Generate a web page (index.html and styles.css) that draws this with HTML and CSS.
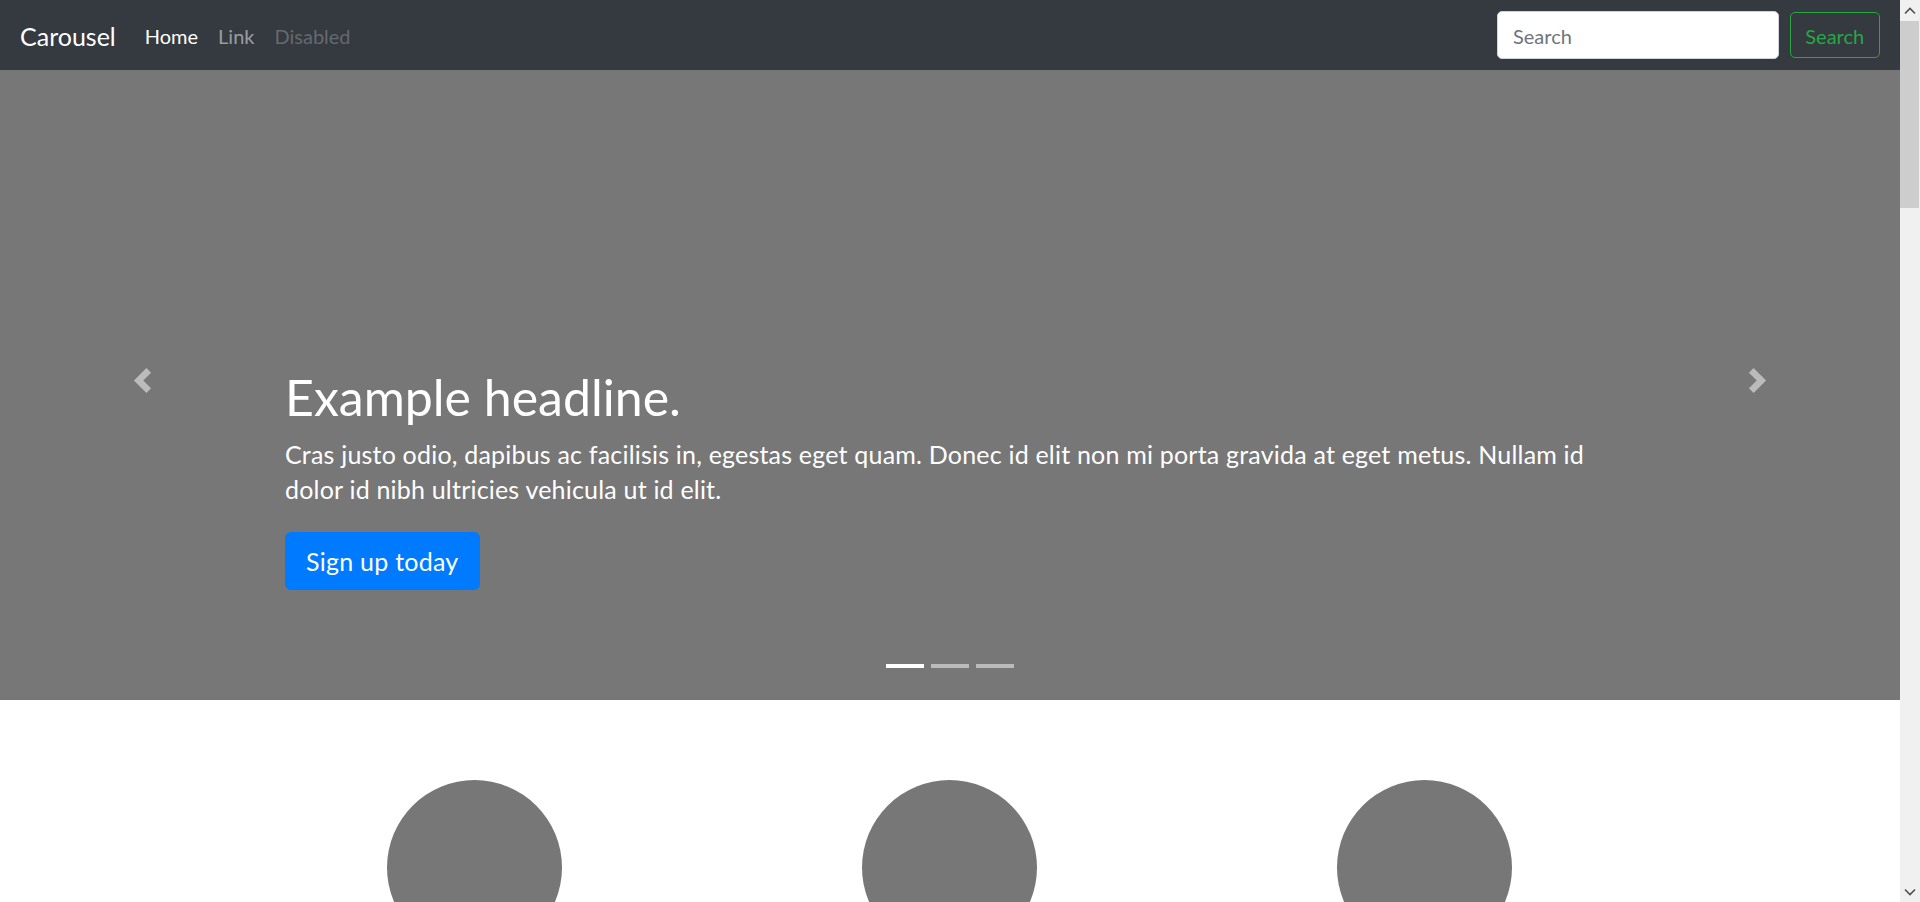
FILE: index.html
```html
<!DOCTYPE html>
<html lang="en">
<head>
<meta charset="utf-8">
<title>Carousel Template</title>
<link rel="stylesheet" href="styles.css">
</head>
<body>
<div class="window">
  <div class="page">
    <header class="navbar">
      <a class="brand" href="#">Carousel</a>
      <ul class="nav">
        <li><a class="nav-link active" href="#">Home</a></li>
        <li><a class="nav-link" href="#">Link</a></li>
        <li><a class="nav-link disabled" href="#">Disabled</a></li>
      </ul>
      <form class="search">
        <input class="search-input" type="text" placeholder="Search">
        <button class="search-btn" type="button">Search</button>
      </form>
    </header>

    <section class="carousel">
      <div class="indicators">
        <span class="dot active"></span>
        <span class="dot"></span>
        <span class="dot"></span>
      </div>
      <div class="caption">
        <h1 class="headline">Example headline.</h1>
        <p class="lead">Cras justo odio, dapibus ac facilisis in, egestas eget quam. Donec id elit non mi porta gravida at eget metus. Nullam id dolor id nibh ultricies vehicula ut id elit.</p>
        <p class="cta"><a class="btn-primary" href="#">Sign up today</a></p>
      </div>
      <a class="control prev" href="#">
        <svg width="25" height="25" viewBox="0 0 8 8"><path fill="#fff" d="M5.25 0l-4 4 4 4 1.5-1.5L4.25 4l2.5-2.5L5.25 0z"/></svg>
      </a>
      <a class="control next" href="#">
        <svg width="25" height="25" viewBox="0 0 8 8"><path fill="#fff" d="M2.75 0l-1.5 1.5L3.75 4l-2.5 2.5L2.75 8l4-4-4-4z"/></svg>
      </a>
    </section>

    <section class="marketing">
      <div class="row">
        <div class="col"><div class="circle"></div></div>
        <div class="col"><div class="circle"></div></div>
        <div class="col"><div class="circle"></div></div>
      </div>
    </section>
  </div>

  <div class="scrollbar">
    <div class="sb-arrow">
      <svg width="12" height="8" viewBox="0 0 12 8"><path d="M1 6.5L6 1.5l5 5" fill="none" stroke="#505050" stroke-width="1.6"/></svg>
    </div>
    <div class="sb-thumb"></div>
    <div class="sb-track"></div>
    <div class="sb-arrow">
      <svg width="12" height="8" viewBox="0 0 12 8"><path d="M1 1.5L6 6.5l5-5" fill="none" stroke="#505050" stroke-width="1.6"/></svg>
    </div>
  </div>
</div>
</body>
</html>
```

FILE: styles.css
```css
* { box-sizing: border-box; }

html, body {
  margin: 0;
  padding: 0;
  height: 902px;
  overflow: hidden;
}

body {
  font-family: "Lato", "Open Sans", "Noto Sans", sans-serif;
  color: #212529;
  background: #fff;
}

.window {
  display: flex;
  height: 902px;
}

.page {
  flex: 1;
  min-width: 0;
  padding-top: 60px;
  overflow: hidden;
  position: relative;
}

/* Navbar (fixed over the top of the carousel) */
.navbar {
  position: fixed;
  top: 0;
  left: 0;
  right: 20px;
  height: 70px;
  z-index: 10;
  background: #343a40;
  display: flex;
  align-items: center;
  padding: 0 20px;
}

.brand {
  color: #fff;
  font-size: 25px;
  text-decoration: none;
  margin-right: 19px;
  padding-top: 1px;
}

.nav {
  list-style: none;
  margin: 0;
  padding: 0;
  display: flex;
}

.nav-link {
  display: block;
  padding: 2px 10px 0;
  font-size: 20px;
  color: rgba(255, 255, 255, 0.5);
  text-decoration: none;
}

.nav-link.active { color: #fff; }
.nav-link.disabled { color: rgba(255, 255, 255, 0.25); }

.search {
  margin: 0 0 0 auto;
  display: flex;
  align-items: center;
}

.search-input {
  width: 282px;
  height: 47.5px;
  margin-right: 10.5px;
  padding: 2px 15px 0;
  font-family: inherit;
  font-size: 20px;
  color: #495057;
  background: #fff;
  border: 1.25px solid #ced4da;
  border-radius: 5px;
  outline: none;
}

.search-input::placeholder { color: #6c757d; }

.search-btn {
  width: 90.5px;
  height: 46px;
  padding: 2px 0 0;
  font-family: inherit;
  font-size: 20px;
  color: #28a745;
  background: transparent;
  border: 1.25px solid #28a745;
  border-radius: 5px;
}

/* Carousel */
.carousel {
  position: relative;
  height: 640px;
  background: #777;
  margin-bottom: 80px;
}

.caption {
  position: absolute;
  left: 15%;
  right: 15%;
  bottom: 60px;
  padding: 25px 0;
  color: #fff;
  text-align: left;
}

.headline {
  margin: 0 0 10px;
  font-size: 50px;
  font-weight: 400;
  line-height: 60px;
}

.lead {
  margin: 0 0 25px;
  font-size: 25px;
  line-height: 35px;
  letter-spacing: 0.2px;
}

.cta {
  margin: 0 0 25px;
}

.btn-primary {
  display: inline-block;
  padding: 10px 20px;
  font-size: 25px;
  line-height: 36px;
  letter-spacing: 0.25px;
  color: #fff;
  background: #007bff;
  border: 1px solid #007bff;
  border-radius: 6px;
  text-decoration: none;
}

.indicators {
  position: absolute;
  left: 0;
  right: 0;
  bottom: 32px;
  display: flex;
  justify-content: center;
  gap: 7.5px;
}

.dot {
  width: 37.5px;
  height: 4px;
  background: rgba(255, 255, 255, 0.5);
}

.dot.active { background: #fff; }

.control {
  position: absolute;
  top: 0;
  bottom: 0;
  width: 15%;
  display: flex;
  align-items: center;
  justify-content: center;
  opacity: 0.5;
}

.control.prev { left: 0; }
.control.next { right: 0; }

/* Marketing circles */
.marketing {
  width: 1425px;
  margin: 0 auto;
  padding: 0 18.75px;
}

.row {
  display: flex;
  margin: 0 -18.75px;
}

.col {
  flex: 0 0 33.3333%;
  padding: 0 18.75px;
  display: flex;
  justify-content: center;
}

.circle {
  width: 175px;
  height: 175px;
  border-radius: 50%;
  background: #777;
}

/* Fake scrollbar */
.scrollbar {
  width: 20px;
  flex: 0 0 20px;
  background: #f0f0f0;
  display: flex;
  flex-direction: column;
}

.sb-arrow {
  height: 21px;
  display: flex;
  align-items: center;
  justify-content: center;
}

.sb-thumb {
  height: 187px;
  margin: 0 1px 0 0;
  background: #cdcdcd;
}

.sb-track { flex: 1; }
```
